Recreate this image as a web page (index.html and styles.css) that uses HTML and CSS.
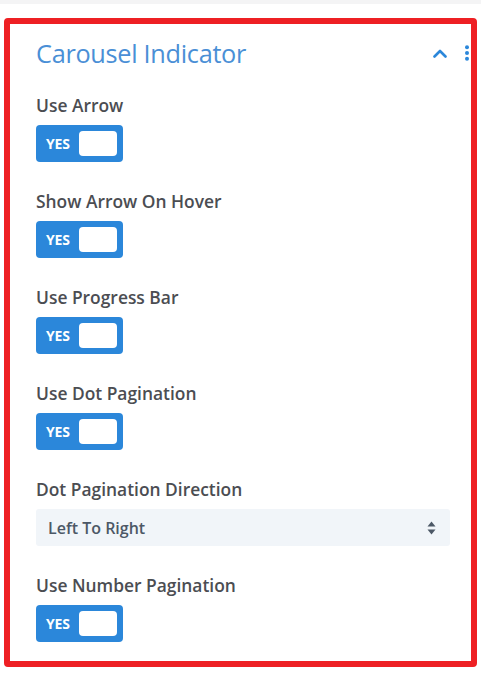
FILE: index.html
```html
<!DOCTYPE html>
<html>
<head>
<meta charset="utf-8">
<link rel="stylesheet" href="styles.css">
</head>
<body>
<div class="strip"></div>
<div class="frame">
  <div class="head">
    <h2 class="title">Carousel Indicator</h2>
    <div class="head-icons">
      <svg class="chev" width="14" height="9" viewBox="0 0 14 9"><path d="M1.5 7.5 L7 2 L12.5 7.5" fill="none" stroke="#2b87da" stroke-width="2.6" stroke-linecap="round" stroke-linejoin="round"/></svg>
      <svg class="dots" width="6" height="16" viewBox="0 0 6 16"><circle cx="3" cy="2.2" r="2" fill="#2b87da"/><circle cx="3" cy="8" r="2" fill="#2b87da"/><circle cx="3" cy="13.8" r="2" fill="#2b87da"/></svg>
    </div>
  </div>
  <div class="field">
    <div class="label">Use Arrow</div>
    <div class="toggle"><span class="yes">YES</span><span class="knob"></span></div>
  </div>
  <div class="field">
    <div class="label">Show Arrow On Hover</div>
    <div class="toggle"><span class="yes">YES</span><span class="knob"></span></div>
  </div>
  <div class="field">
    <div class="label">Use Progress Bar</div>
    <div class="toggle"><span class="yes">YES</span><span class="knob"></span></div>
  </div>
  <div class="field">
    <div class="label">Use Dot Pagination</div>
    <div class="toggle"><span class="yes">YES</span><span class="knob"></span></div>
  </div>
  <div class="field">
    <div class="label">Dot Pagination Direction</div>
    <div class="select"><span>Left To Right</span>
      <svg width="9" height="14" viewBox="0 0 9 14"><path d="M4.5 0.5 L8.5 5.5 L0.5 5.5 Z" fill="#4c5866"/><path d="M4.5 13.5 L8.5 8.5 L0.5 8.5 Z" fill="#4c5866"/></svg>
    </div>
  </div>
  <div class="field">
    <div class="label">Use Number Pagination</div>
    <div class="toggle"><span class="yes">YES</span><span class="knob"></span></div>
  </div>
</div>
</body>
</html>
```
FILE: styles.css
```css
* { box-sizing: border-box; }
html, body { margin: 0; padding: 0; background: #fff; }
body { font-family: "Open Sans", "Liberation Sans", sans-serif; width: 481px; height: 677px; overflow: hidden; }
.strip { height: 4px; background: #f4f4f5; }
.frame {
  margin: 14px 4px 0 4px;
  height: 649px;
  border: 6.5px solid #ee2024;
  border-radius: 4px;
  padding: 14px 0 0 26px;
}
.head { display: flex; align-items: center; justify-content: space-between; height: 30px; }
.title { margin: 0; font-weight: 400; font-size: 25.3px; line-height: 30px; color: #4a8fd6; letter-spacing: -0.3px; }
.head-icons { display: flex; align-items: center; gap: 17px; padding-top: 0; margin-right: 1px; }
.chev { display: block; }
.dots { display: block; }
.field { margin-top: 29px; }
.head + .field { margin-top: 27px; }
.label { font-size: 17.4px; font-weight: 600; color: #4b4d52; line-height: 20px; }
.toggle {
  margin-top: 10px;
  width: 87px; height: 37px;
  background: #2b87da;
  border-radius: 4px;
  display: flex; align-items: center;
  padding-left: 10px;
}
.yes { color: #fff; font-weight: 700; font-size: 14px; letter-spacing: -0.2px; width: 33px; }
.knob { width: 38px; height: 25px; background: #fff; border-radius: 4px; }
.select {
  margin-top: 10px;
  width: 414px; height: 37px;
  background: #f1f5f9;
  border-radius: 3px;
  display: flex; align-items: center; justify-content: space-between;
  padding: 0 14px 0 12px;
  font-size: 16px; font-weight: 600; color: #4c5866;
}
.select svg { display: block; }
```
